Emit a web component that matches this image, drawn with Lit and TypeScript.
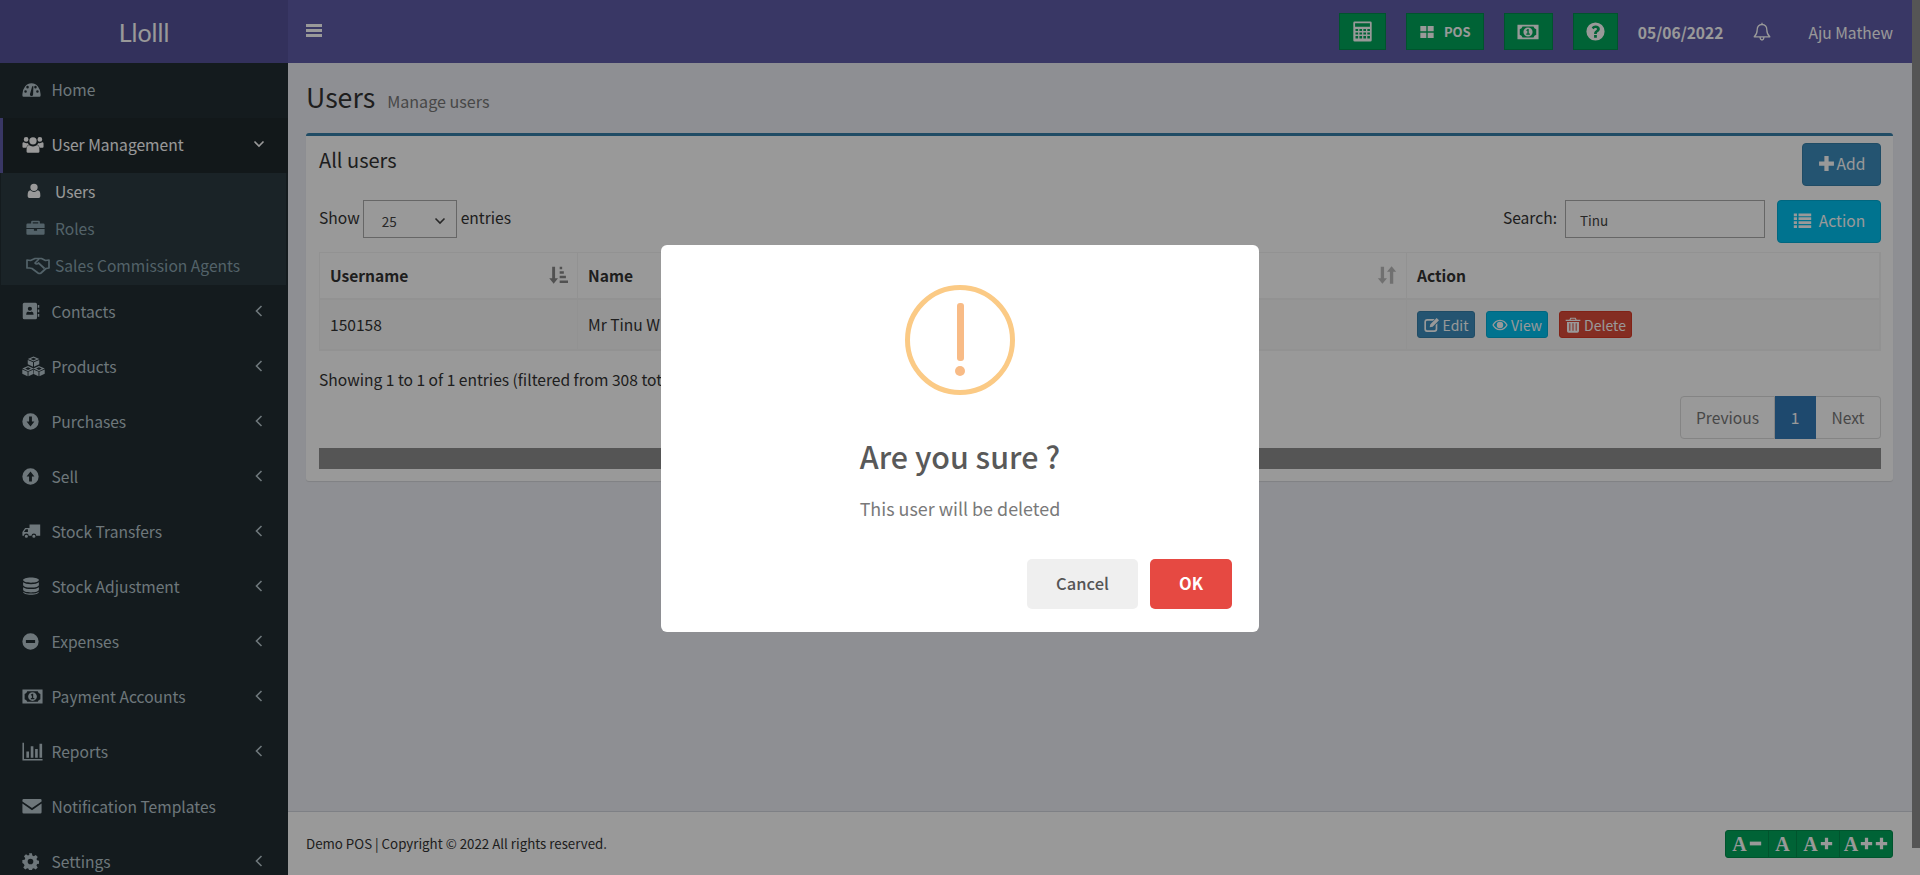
import { LitElement, html, css, svg } from 'lit';
import { customElement } from 'lit/decorators.js';

const c = (x: number, y: number, r: number) =>
  `M${x - r} ${y}a${r} ${r} 0 1 0 ${2 * r} 0a${r} ${r} 0 1 0 ${-2 * r} 0z`;

// one isometric cube: hollow top, two filled sides
const cube = (x: number, y: number, s: number) => {
  const h = s * 0.45;
  const k = h * 0.5;
  return (
    `M${x} ${y}L${x + s} ${y + h}L${x} ${y + 2 * h}L${x - s} ${y + h}z` +
    `M${x} ${y + k}L${x - s * 0.5} ${y + h}L${x} ${y + 2 * h - k}L${x + s * 0.5} ${y + h}z` +
    `M${x - s} ${y + h + 0.9}L${x - 0.5} ${y + 2 * h + 0.7}V${y + 4 * h}L${x - s} ${y + 3 * h}z` +
    `M${x + s} ${y + h + 0.9}L${x + 0.5} ${y + 2 * h + 0.7}V${y + 4 * h}L${x + s} ${y + 3 * h}z`
  );
};

// hand drawn versions of the font-awesome 4 glyphs, all on a 24 box
const ICONS: Record<string, string> = {
  home: `M.5 18a11.5 14 0 1 1 23 0v1.500q0 1.500-1.500 1.500H2q-1.500 0-1.500-1.500z${c(4.5, 14.5, 1.6)}${c(7, 9, 1.6)}${c(17, 9, 1.6)}${c(19.5, 14.5, 1.6)}M10 18a2 2 0 0 0 4 .5l.4-10.500-1.500-.2z`,
  users: `${c(4.5, 7, 2.6)}${c(19.5, 7, 2.6)}${c(12, 8.5, 4)}M.5 11.5q0-1.500 1.500-1.500l1 .6q1.500.8 3 .2.600 1 1.500 1.700-2.300 1-2.800 3.500H1.500q-1 0-1-1zM23.500 11.500q0-1.500-1.500-1.500l-1 .6q-1.500.8-3 .2-.6 1-1.500 1.700 2.300 1 2.800 3.500h3.200q1 0 1-1zM7.500 13q1 .5 1.500 1 3 1.500 6 0 .5-.5 1.500-1 2.500 1 2.500 5v2.500q0 1-1.500 1H6.500q-1.500 0-1.500-1V18q0-4 2.500-5z`,
  user: `${c(12, 6.5, 5.5)}M6.500 11q2.500 2.500 5.500 2.500T17.500 11q4 .5 4 7v2q0 2.500-2.500 2.500H5q-2.500 0-2.500-2.500v-2q0-6.500 4-7z`,
  case: `M8 3.500h8q1.500 0 1.500 1.500v2H22q1.500 0 1.500 1.500v4H.5v-4Q.5 7 2 7h4.500V5Q6.500 3.500 8 3.500zM8.500 5.500V7h7V5.500zM.5 14h9.500v2h4v-2h9.500v5.500Q23.500 21 22 21H2q-1.500 0-1.500-1.500z`,
  book: `M3 1h15q2 0 2 2v18q0 2-2 2H3q-2 0-2-2V3q0-2 2-2z${c(10.5, 9, 2.8)}M5.500 17q0-4 2.500-4.500 2.500 1.500 5 0 2.500.5 2.500 4.500zM21 4h2v3.500h-2zM21 10h2v3.500h-2zM21 16h2v3.500h-2z`,
  cubes: `${cube(12, 1.5, 6)}${cube(6.3, 11.5, 6)}${cube(17.7, 11.5, 6)}`,
  down: `${c(12, 12, 11.5)}M10 5h4v7h3.500L12 19l-5.500-7H10z`,
  up: `${c(12, 12, 11.5)}M12 5l5.500 7H14v7h-4v-7H6.500z`,
  truck: `M9.500 3H23v14.500h-5a3 3 0 0 0-6 0H8.500a3 3 0 0 0-6 0H.5v-5L4 7.500h5.500zM7.500 9H4.800L2.500 12.500h5zM5.500 16a2 2 0 1 1 0 4 2 2 0 0 1 0-4zM15 16a2 2 0 1 1 0 4 2 2 0 0 1 0-4z`,
  db: `M12 .5c6 0 10.500 1.500 10.500 3.500S18 7.500 12 7.500 1.500 6 1.500 4 6 .5 12 .5zM1.500 7q3 2.500 10.500 2.500T22.500 7v3.500c0 2-4.500 3.500-10.500 3.500S1.500 12.500 1.500 10.500zM1.500 13.500Q4.500 16 12 16t10.500-2.500V17c0 2-4.500 3.500-10.500 3.500S1.500 19 1.500 17zM1.500 19.500Q4.500 22 12 22t10.500-2.500c0 2.500-4.500 4-10.500 4s-10.500-1.500-10.500-4z`,
  minus: `${c(12, 12, 11.5)}M5.500 10h13v4h-13z`,
  money: `M.5 4h23v16H.5zM3 9v6a4 4 0 0 1 3 3h12a4 4 0 0 1 3-3V9a4 4 0 0 1-3-3H6a4 4 0 0 1-3 3z${c(12, 12, 5)}M12.800 8.800h-1.200l-1.600 1.300.7.900.6-.5v3.200h-1.200v1.300h4v-1.300h-1.300z`,
  chart: `M.5 2h1.800v18.500h21.200v1.800H.5zM5 12h3v7H5zM10 6h3v13h-3zM15 9h3v10h-3zM20 3h3v16h-3z`,
  mail: `M.5 5Q.5 3.500 2 3.500h20q1.500 0 1.500 1.500v1.500L12 14.500.5 6.500zM.5 9L12 17l11.500-8v10.500q0 1.500-1.500 1.500H2q-1.500 0-1.500-1.500z`,
  cog: `M10 .5h4l.6 3.200 2.100.9 2.700-1.800 2.800 2.800-1.800 2.700.9 2.100 3.200.6v4l-3.200.6-.9 2.100 1.800 2.700-2.800 2.800-2.700-1.800-2.100.9-.6 3.200h-4l-.6-3.200-2.100-.9-2.700 1.800-2.800-2.800 1.800-2.700-.9-2.100L.5 14v-4l3.200-.6.9-2.100-1.800-2.700 2.800-2.800 2.700 1.800 2.100-.9z${c(12, 12, 4)}`,
  calc: `M3 .5h18q1.500 0 1.500 1.500v20q0 1.500-1.500 1.500H3q-1.500 0-1.500-1.500V2Q1.500.5 3 .5zM3.500 2.500v4h17v-4zM4 9v2.500h3V9zM8.500 9v2.500h3V9zM13 9v2.500h3V9zM17.500 9v2.500h3V9zM4 13v2.500h3V13zM8.500 13v2.500h3V13zM13 13v2.500h3V13zM17.500 13v2.500h3V13zM4 17v3h3v-3zM8.500 17v3h3v-3zM13 17v3h3v-3zM17.500 17v3h3v-3z`,
  grid: `M2 3h9v8H2zM13 3h9v8h-9zM2 13h9v8H2zM13 13h9v8h-9z`,
  help: `${c(12, 12, 11.5)}M10.200 16.500h3.500V20h-3.500zM12.200 4.500c3 0 5.300 1.800 5.300 4.300 0 2-1.200 2.900-2.400 3.700-.9.600-1.400 1-1.400 2.500h-3.500c0-2.600 1-3.500 2.300-4.400.9-.6 1.400-1 1.400-1.700 0-.8-.8-1.400-1.800-1.400-1.100 0-1.800.6-2.400 1.500L7.200 7.300c1.100-1.800 2.700-2.800 5-2.800z`,
  plus: `M9 1.500h6V9h7.500v6H15v7.500H9V15H1.500V9H9z`,
  dash: `M1.500 8.500h21v7h-21z`,
  list: `M1 3h4v3.500H1zM7 3h16v3.500H7zM1 8h4v3.500H1zM7 8h16v3.500H7zM1 13h4v3.500H1zM7 13h16v3.500H7zM1 18h4v3.500H1zM7 18h16v3.500H7z`,
  edit: `M5 3h11l-2.500 2.500H5Q3 5.500 3 7.500v10Q3 20 5 20h10q2.500 0 2.500-2.500V12l2.500-2.500v8.500q0 4.500-4.500 4.500h-11Q.5 22.500.5 18V7.500Q.5 3 5 3zM19 1.500l3.500 3.500L13 14.500l-4.500 1 1-4.500z`,
  eye: `M12 4c5.500 0 9.500 3.500 11.500 8-2 4.500-6 8-11.500 8S2.500 16.500.5 12C2.500 7.500 6.500 4 12 4zM12 6c-4 0-7.500 2.500-9.300 6 1.800 3.500 5.300 6 9.300 6s7.500-2.500 9.300-6C19.500 8.500 16 6 12 6z${c(12, 12, 4.8)}`,
  trash: `M8 1h8l1.500 3H23v2H1V4h5.500zM9 2.800L8.500 4h7L15 2.800zM3 7.500h18V21q0 2.500-2.500 2.500h-13Q3 23.500 3 21zM6.500 9.500v11h1.500v-11zM11.200 9.500v11h1.600v-11zM16 9.500v11h1.500v-11z`,
  sortAsc: `M5 2h3.500v14H12l-5.200 6.500L1.500 16H5zM14 2h3v3h-3zM14 7.500h5v3h-5zM14 13h7.500v3H14zM14 18.500h10v3H14z`,
  sort: `M4.500 2h4v14h3.500l-5.500 6.500L1 16h3.500zM17.500 1.500L23 8h-3.500v14.500h-4V8H12z`,
};

const Icon = (name: string, size = 20) => html`<svg
  class="icon"
  width=${size}
  height=${size}
  viewBox="0 0 24 24"
  fill="currentColor"
  fill-rule="evenodd"
>
  ${svg`<path d=${ICONS[name]}></path>`}
</svg>`;

// outline icons are strokes, not fills
const Handshake = html`<svg class="icon" width="24" height="20" viewBox="0 0 24 20" fill="none" stroke="currentColor" stroke-width="1.7" stroke-linejoin="round">
  <path d="M1 5l3.500.5L9 3.500h6.500l4 2 3.500-.5v8l-3 .5-5 4.500q-1.500 1-3 0L6 13.500l-2.500-.5-2.500 0z"></path>
  <path d="M13 4l-4 4q1.500 2 3.500 0l6 5.500"></path>
</svg>`;

const Bell = html`<svg class="icon" width="18" height="20" viewBox="0 0 18 20" fill="none" stroke="currentColor" stroke-width="1.3" stroke-linejoin="round">
  <path d="M9 2.500c3.200 0 4.800 2.300 4.800 5.300 0 4 1.500 5.700 3 7H1.200c1.500-1.300 3-3 3-7 0-3 1.600-5.300 4.800-5.300zM9 .8v1.700M7 15q.3 3 2 3t2-3"></path>
</svg>`;

const Angle = (down: boolean) => html`<svg class="angle" width="12" height="12" viewBox="0 0 12 12" fill="none" stroke="currentColor" stroke-width="1.600">
  <path d=${down ? 'M1.500 3.500L6 8l4.500-4.500' : 'M8.500 1L3.500 6l5 5'}></path>
</svg>`;

const MENU_BOTTOM = [
  { icon: 'book', size: 18, label: 'Contacts', arrow: true },
  { icon: 'cubes', size: 23, label: 'Products', arrow: true },
  { icon: 'down', size: 17, label: 'Purchases', arrow: true },
  { icon: 'up', size: 17, label: 'Sell', arrow: true },
  { icon: 'truck', size: 19, label: 'Stock Transfers', arrow: true },
  { icon: 'db', size: 18, label: 'Stock Adjustment', arrow: true },
  { icon: 'minus', size: 17, label: 'Expenses', arrow: true },
  { icon: 'money', size: 21, label: 'Payment Accounts', arrow: true },
  { icon: 'chart', size: 21, label: 'Reports', arrow: true },
  { icon: 'mail', size: 20, label: 'Notification Templates', arrow: false },
  { icon: 'cog', size: 17, label: 'Settings', arrow: true },
];

@customElement('app-root')
export class AppRoot extends LitElement {
  static styles = css`
    :host {
      display: block;
      height: 875px;
      overflow: hidden;
      position: relative;
      font-family: 'Noto Sans CJK SC', 'Noto Sans', sans-serif;
      font-size: 15.6px;
      line-height: 24px;
      color: #333;
    }
    .icon {
      display: block;
      flex: none;
    }
    .app {
      display: flex;
      height: 875px;
    }
    .sidebar {
      width: 288px;
      flex: none;
      background: #222d32;
      color: #b8c7ce;
      overflow: hidden;
    }
    .logo {
      height: 63px;
      background: #555299;
      color: #fff;
      font-family: Lato, sans-serif;
      font-size: 25px;
      display: flex;
      align-items: center;
      justify-content: center;
    }
    .item {
      height: 55px;
      display: flex;
      align-items: center;
      border-left: 3px solid transparent;
      padding: 0 23px 3px 19px;
      box-sizing: border-box;
    }
    .item.active {
      background: #1e282c;
      border-left-color: #605ca8;
      color: #fff;
    }
    .item .ic {
      width: 29.5px;
      flex: none;
    }
    .item .label {
      flex: 1;
    }
    .sub {
      background: #2c3b41;
      margin: 0 2px 0 1px;
      height: 112px;
      color: #8aa4af;
    }
    .sub .row {
      height: 37px;
      display: flex;
      align-items: center;
      padding: 0 0 2px 25px;
      box-sizing: border-box;
    }
    .sub .row.on {
      color: #fff;
    }
    .sub .ic {
      width: 29px;
      flex: none;
    }
    .main {
      flex: 1;
      min-width: 0;
      display: flex;
      flex-direction: column;
      background: #edeff5;
    }
    .topbar {
      height: 63px;
      flex: none;
      background: #605ca8;
      color: #fff;
      display: flex;
      align-items: center;
      padding: 0 19px 0 18px;
    }
    .burger {
      width: 16px;
      height: 13px;
      margin: -2px auto 0 0;
      display: flex;
      flex-direction: column;
      justify-content: space-between;
    }
    .burger i {
      height: 3px;
      background: #fff;
      display: block;
    }
    .gbtn {
      height: 37px;
      box-sizing: border-box;
      background: #00a65a;
      border: 1px solid #008d4c;
      display: flex;
      align-items: center;
      justify-content: center;
      gap: 9px;
      margin-right: 20px;
      font-size: 13px;
      font-weight: 700;
    }
    .date {
      font-weight: 700;
      margin-right: 2px;
    }
    .bell {
      margin: 0 37px 0 28px;
    }
    .content {
      flex: 1;
      padding: 0 19px 0 18px;
    }
    .title {
      height: 70px;
      display: flex;
      align-items: baseline;
      padding-top: 14px;
      box-sizing: border-box;
      gap: 12px;
      font-size: 26.7px;
      line-height: 40px;
    }
    .title small {
      font-size: 16.1px;
      color: #777;
    }
    .box {
      background: #fff;
      border-top: 3px solid #367fa9;
      border-radius: 3px;
      box-shadow: 0 1px 1px rgba(0, 0, 0, 0.1);
      padding: 7px 12px 13px 13px;
      height: 348px;
      box-sizing: border-box;
    }
    .box-head {
      display: flex;
      justify-content: space-between;
      align-items: flex-start;
      height: 43px;
      margin-bottom: 14px;
    }
    .box-head h3 {
      margin: 0;
      font-size: 20px;
      font-weight: 400;
      line-height: 34px;
    }
    .btn {
      color: #fff;
      border-radius: 4px;
      box-sizing: border-box;
      display: flex;
      align-items: center;
      justify-content: center;
      font-size: 15.6px;
    }
    .btn.add {
      width: 79px;
      height: 43px;
      gap: 2px;
      padding-bottom: 3px;
      background: #3c8dbc;
      border: 1px solid #367fa9;
    }
    .btn.action {
      width: 104px;
      height: 43px;
      gap: 7px;
      padding-bottom: 3px;
      background: #00c0ef;
      border: 1px solid #00acd6;
      margin-left: 12px;
    }
    .filters {
      display: flex;
      height: 43px;
      margin-bottom: 9px;
    }
    .length {
      display: flex;
      align-items: flex-start;
      gap: 3px;
      margin-right: auto;
      line-height: 34px;
    }
    .select {
      width: 94px;
      height: 38px;
      box-sizing: border-box;
      border: 1px solid #aaa;
      margin-right: 1px;
      display: flex;
      align-items: center;
      justify-content: space-between;
      padding: 4px 10px 0 18px;
      font-size: 13.5px;
      color: #444;
    }
    .search {
      line-height: 34px;
      margin-right: 8px;
    }
    .input {
      width: 200px;
      height: 38px;
      box-sizing: border-box;
      border: 1px solid #aaa;
      padding: 4px 14px 0;
      font-size: 13.5px;
      line-height: 30px;
      color: #444;
    }
    .table {
      display: grid;
      grid-template-columns: 258px 400px 429px 1fr;
      border: 1px solid #f4f4f4;
    }
    .cell {
      padding: 0 9px 2px 10px;
      display: flex;
      align-items: center;
      justify-content: space-between;
      border-right: 1px solid #f4f4f4;
      box-sizing: border-box;
    }
    .cell.h {
      height: 47px;
      font-weight: 700;
      border-bottom: 2px solid #f4f4f4;
    }
    .cell.d {
      height: 50px;
      background: #f9f9f9;
      border-bottom: 1px solid #f4f4f4;
    }
    .sort {
      color: #bbb;
    }
    .sort.on {
      color: #888;
    }
    .acts {
      display: flex;
      justify-content: flex-start;
      gap: 11px;
      padding-bottom: 0;
    }
    .xs {
      height: 27px;
      font-size: 14px;
      gap: 3px;
      padding: 0 6px;
      border-radius: 3px;
    }
    .xs.edit {
      background: #3c8dbc;
      border: 1px solid #367fa9;
      width: 58px;
    }
    .xs.view {
      background: #00c0ef;
      border: 1px solid #00acd6;
      width: 62px;
    }
    .xs.del {
      background: #dd4b39;
      border: 1px solid #d73925;
      width: 73px;
    }
    .info {
      height: 45px;
      padding-top: 16px;
      box-sizing: border-box;
      white-space: nowrap;
    }
    .pager {
      display: flex;
      justify-content: flex-end;
      height: 43px;
      margin-bottom: 9px;
      color: #777;
    }
    .pager div {
      display: flex;
      align-items: center;
      justify-content: center;
      box-sizing: border-box;
      padding-bottom: 2px;
      border: 1px solid #ddd;
      border-left: 0;
    }
    .pager .prev {
      width: 95px;
      border-left: 1px solid #ddd;
      border-radius: 4px 0 0 4px;
    }
    .pager .cur {
      width: 41px;
      background: #337ab7;
      border-color: #337ab7;
      color: #fff;
    }
    .pager .next {
      width: 65px;
      border-radius: 0 4px 4px 0;
    }
    .bar {
      height: 21px;
      background: #8e8e8e;
    }
    .footer {
      height: 64px;
      flex: none;
      box-sizing: border-box;
      background: #fff;
      border-top: 1px solid #d2d6de;
      display: flex;
      align-items: center;
      justify-content: space-between;
      padding: 0 19px 0 18px;
      font-size: 13.3px;
    }
    .fonts {
      display: flex;
      height: 28px;
      background: #00a65a;
      border: 1px solid #008d4c;
      border-radius: 3px;
      color: #fff;
      font-family: 'Liberation Serif', serif;
      font-weight: 700;
      font-size: 20px;
      box-sizing: border-box;
    }
    .fonts div {
      box-sizing: border-box;
      display: flex;
      align-items: center;
      justify-content: center;
      gap: 2px;
      border-right: 1px solid #008d4c;
    }
    .fonts div:last-child {
      border-right: 0;
    }
    .scroll {
      width: 8px;
      flex: none;
      background: #fff;
    }
    .scroll div {
      height: 848px;
      background: #8e8e8e;
    }
    .overlay {
      position: absolute;
      inset: 0;
      background: rgba(0, 0, 0, 0.4);
      display: flex;
      align-items: center;
      justify-content: center;
      padding-top: 2px;
      box-sizing: border-box;
    }
    .modal {
      width: 598px;
      height: 387px;
      box-sizing: border-box;
      background: #fff;
      border-radius: 6px;
      display: flex;
      flex-direction: column;
      align-items: center;
      padding: 40px 27px 23px;
    }
    .warn {
      width: 110px;
      height: 110px;
      box-sizing: border-box;
      border: 5px solid #fbca85;
      border-radius: 50%;
      display: flex;
      flex-direction: column;
      align-items: center;
      padding-top: 13px;
      flex: none;
    }
    .warn .stem {
      width: 7px;
      height: 58px;
      background: #f8bb86;
      border-radius: 3px;
    }
    .warn .dot {
      width: 10px;
      height: 10px;
      margin-top: 5px;
      background: #f8bb86;
      border-radius: 50%;
    }
    .modal h2 {
      margin: 41px 0 0;
      font-size: 30.4px;
      line-height: 40px;
      font-weight: 500;
      color: #595959;
    }
    .modal p {
      margin: 17px 0 0;
      font-size: 17.9px;
      line-height: 30px;
      color: #797979;
    }
    .modal .btns {
      margin-top: auto;
      align-self: flex-end;
      display: flex;
      gap: 12px;
    }
    .modal .btns div {
      height: 50px;
      box-sizing: border-box;
      padding-bottom: 2px;
      border-radius: 5px;
      display: flex;
      align-items: center;
      justify-content: center;
      font-size: 16.5px;
      font-weight: 500;
    }
    .cancel {
      width: 111px;
      background: #efefef;
      color: #555;
    }
    .modal .btns .ok {
      width: 82px;
      background: #e64942;
      color: #fff;
      font-weight: 700;
    }
  `;

  private menuItem(m: { icon: string; size: number; label: string; arrow: boolean }) {
    return html`<div class="item">
      <span class="ic">${Icon(m.icon, m.size)}</span>
      <span class="label">${m.label}</span>
      ${m.arrow ? Angle(false) : ''}
    </div>`;
  }

  render() {
    return html`
      <div class="app">
        <aside class="sidebar">
          <div class="logo">Llolll</div>
          ${this.menuItem({ icon: 'home', size: 19, label: 'Home', arrow: false })}
          <div class="item active">
            <span class="ic">${Icon('users', 22)}</span>
            <span class="label">User Management</span>
            ${Angle(true)}
          </div>
          <div class="sub">
            <div class="row on"><span class="ic">${Icon('user', 16)}</span>Users</div>
            <div class="row"><span class="ic">${Icon('case', 19)}</span>Roles</div>
            <div class="row"><span class="ic">${Handshake}</span>Sales Commission Agents</div>
          </div>
          ${MENU_BOTTOM.map((m) => this.menuItem(m))}
        </aside>
        <div class="main">
          <header class="topbar">
            <div class="burger"><i></i><i></i><i></i></div>
            <div class="gbtn" style="width:47px">${Icon('calc', 21)}</div>
            <div class="gbtn" style="width:78px">${Icon('grid', 16)}POS</div>
            <div class="gbtn" style="width:49px">${Icon('money', 22)}</div>
            <div class="gbtn" style="width:45px">${Icon('help', 19)}</div>
            <div class="date">05/06/2022</div>
            <div class="bell">${Bell}</div>
            <div>Aju Mathew</div>
          </header>
          <section class="content">
            <div class="title">Users <small>Manage users</small></div>
            <div class="box">
              <div class="box-head">
                <h3>All users</h3>
                <div class="btn add">${Icon('plus', 17)}Add</div>
              </div>
              <div class="filters">
                <div class="length">
                  Show
                  <div class="select">25 ${Angle(true)}</div>
                  entries
                </div>
                <div class="search">Search:</div>
                <div class="input">Tinu</div>
                <div class="btn action">${Icon('list', 19)}Action</div>
              </div>
              <div class="table">
                <div class="cell h">Username <span class="sort on">${Icon('sortAsc', 20)}</span></div>
                <div class="cell h">Name</div>
                <div class="cell h"><span></span><span class="sort">${Icon('sort', 20)}</span></div>
                <div class="cell h">Action</div>
                <div class="cell d">150158</div>
                <div class="cell d">Mr Tinu W</div>
                <div class="cell d"></div>
                <div class="cell d acts">
                  <div class="btn xs edit">${Icon('edit', 16)}Edit</div>
                  <div class="btn xs view">${Icon('eye', 16)}View</div>
                  <div class="btn xs del">${Icon('trash', 16)}Delete</div>
                </div>
              </div>
              <div class="info">Showing 1 to 1 of 1 entries (filtered from 308 total entries)</div>
              <div class="pager">
                <div class="prev">Previous</div>
                <div class="cur">1</div>
                <div class="next">Next</div>
              </div>
              <div class="bar"></div>
            </div>
          </section>
          <footer class="footer">
            <div>Demo POS | Copyright © 2022 All rights reserved.</div>
            <div class="fonts">
              <div style="width:43px">A${Icon('dash', 13)}</div>
              <div style="width:28px">A</div>
              <div style="width:43px">A${Icon('plus', 13)}</div>
              <div style="width:52px">A${Icon('plus', 13)}${Icon('plus', 13)}</div>
            </div>
          </footer>
        </div>
        <div class="scroll"><div></div></div>
      </div>
      <div class="overlay">
        <div class="modal">
          <div class="warn"><span class="stem"></span><span class="dot"></span></div>
          <h2>Are you sure ?</h2>
          <p>This user will be deleted</p>
          <div class="btns">
            <div class="cancel">Cancel</div>
            <div class="ok">OK</div>
          </div>
        </div>
      </div>
    `;
  }
}
